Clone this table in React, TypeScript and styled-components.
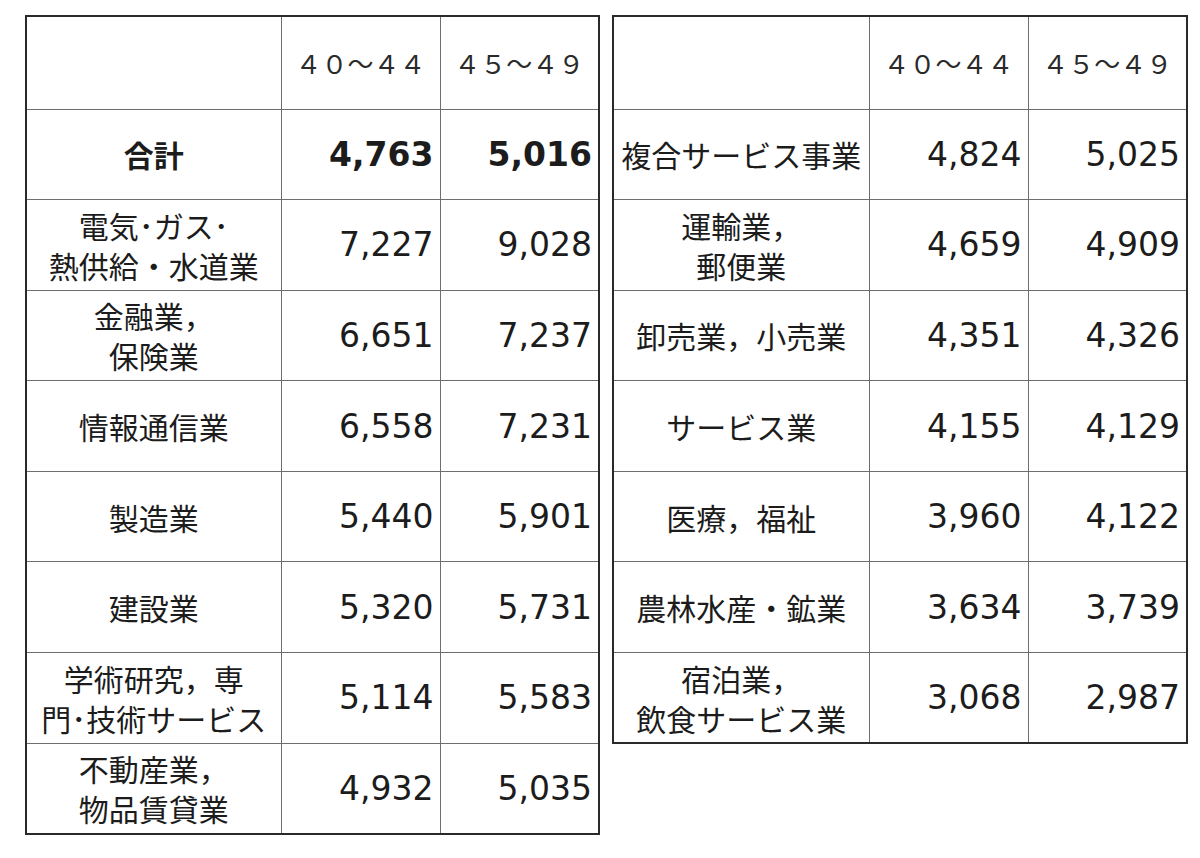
import React from "react";
import styled, { createGlobalStyle } from "styled-components";

const GlobalStyle = createGlobalStyle`
  html, body {
    margin: 0;
    padding: 0;
    background: #fff;
  }
  body {
    font-family: "Noto Sans CJK JP", "Noto Sans", sans-serif;
    color: #1c1c1c;
  }
`;

const Page = styled.div`
  display: flex;
  align-items: flex-start;
  gap: 12px;
  padding: 15px 0 0 25px;
  width: 1200px;
  height: 858px;
  box-sizing: border-box;
`;

const Table = styled.table<{ $labelWidth: number }>`
  border-collapse: collapse;
  table-layout: fixed;
  width: ${({ $labelWidth }) => $labelWidth + 318}px;
  border: 2px solid #2a2a2a;

  col.label {
    width: ${({ $labelWidth }) => $labelWidth}px;
  }
  col.num {
    width: 159px;
  }
`;

const HeadRow = styled.tr`
  height: 93px;
`;

const Row = styled.tr`
  height: 90.6px;
`;

const Cell = styled.td`
  border: 1px solid #6e6e6e;
  padding: 0;
  vertical-align: middle;
`;

const HeadCell = styled(Cell)`
  text-align: center;
  font-family: "Noto Sans CJK JP", sans-serif;
  font-size: 26px;
  color: #2a2a2a;
`;

const Label = styled(Cell)<{ $bold?: boolean }>`
  text-align: center;
  font-family: "Noto Sans CJK JP", sans-serif;
  font-size: 30px;
  line-height: 40px;
  font-weight: ${({ $bold }) => ($bold ? 700 : 400)};
`;

const Num = styled(Cell)<{ $bold?: boolean }>`
  text-align: right;
  padding-right: 6px;
  font-family: "DejaVu Sans", Verdana, sans-serif;
  font-size: 33px;
  font-weight: ${({ $bold }) => ($bold ? 700 : 400)};
`;

type Entry = { label: React.ReactNode; a: string; b: string; bold?: boolean };

const leftRows: Entry[] = [
  { label: "合計", a: "4,763", b: "5,016", bold: true },
  { label: <>電気･ガス･<br />熱供給・水道業</>, a: "7,227", b: "9,028" },
  { label: <>金融業，<br />保険業</>, a: "6,651", b: "7,237" },
  { label: "情報通信業", a: "6,558", b: "7,231" },
  { label: "製造業", a: "5,440", b: "5,901" },
  { label: "建設業", a: "5,320", b: "5,731" },
  { label: <>学術研究，専<br />門･技術サービス</>, a: "5,114", b: "5,583" },
  { label: <>不動産業，<br />物品賃貸業</>, a: "4,932", b: "5,035" },
];

const rightRows: Entry[] = [
  { label: "複合サービス事業", a: "4,824", b: "5,025" },
  { label: <>運輸業，<br />郵便業</>, a: "4,659", b: "4,909" },
  { label: "卸売業，小売業", a: "4,351", b: "4,326" },
  { label: "サービス業", a: "4,155", b: "4,129" },
  { label: "医療，福祉", a: "3,960", b: "4,122" },
  { label: "農林水産・鉱業", a: "3,634", b: "3,739" },
  { label: <>宿泊業，<br />飲食サービス業</>, a: "3,068", b: "2,987" },
];

function WageTable({ rows, labelWidth }: { rows: Entry[]; labelWidth: number }) {
  return (
    <Table $labelWidth={labelWidth}>
      <colgroup>
        <col className="label" />
        <col className="num" />
        <col className="num" />
      </colgroup>
      <tbody>
        <HeadRow>
          <HeadCell />
          <HeadCell>４０～４４</HeadCell>
          <HeadCell>４５～４９</HeadCell>
        </HeadRow>
        {rows.map((r, i) => (
          <Row key={i}>
            <Label $bold={r.bold}>{r.label}</Label>
            <Num $bold={r.bold}>{r.a}</Num>
            <Num $bold={r.bold}>{r.b}</Num>
          </Row>
        ))}
      </tbody>
    </Table>
  );
}

export default function App() {
  return (
    <>
      <GlobalStyle />
      <Page>
        <WageTable rows={leftRows} labelWidth={255} />
        <WageTable rows={rightRows} labelWidth={256} />
      </Page>
    </>
  );
}
